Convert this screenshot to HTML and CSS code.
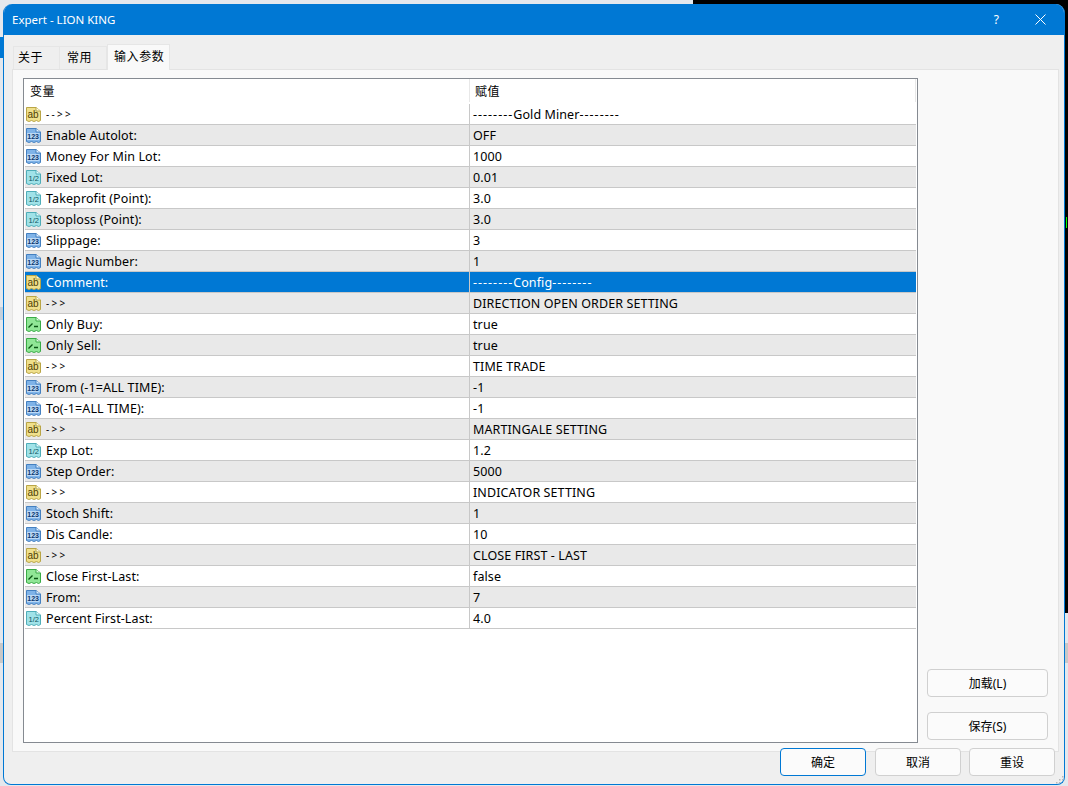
FILE: index.html
```html
<!DOCTYPE html>
<html>
    <head>
        <title>Expert - LION KING</title>
        <link rel="stylesheet" href="styles.css">
    </head>
    <body>
        <svg class="defs" width="0" height="0">
            <defs>
                <symbol id="sheet-ab" viewBox="0 0 17 17">
                    <path d="M1.500 1.500H11L15.500 5V14.500L13.500 15.500L11.500 14.500L9 15.500L6.500 14.500L4 15.500L1.500 14.500Z" fill="#f0e08c" stroke="#b9a546"/>
                    <path d="M11 1.500V5H15.500" fill="#fffbe0" stroke="#b9a546"/>
                    <text x="2.500" y="12" class="icon_text" fill="#4f4004" font-size="10">ab</text>
                </symbol>
                <symbol id="sheet-int" viewBox="0 0 17 17">
                    <path d="M1.500 1.500H11L15.500 5V14.500L13.500 15.500L11.500 14.500L9 15.500L6.500 14.500L4 15.500L1.500 14.500Z" fill="#7fb3e8" stroke="#4480c0"/>
                    <path d="M11 1.500V5H15.500" fill="#e0efff" stroke="#4480c0"/>
                    <rect x="2" y="6" width="12.500" height="7" fill="#bcd9f5"/>
                    <text x="2.300" y="12" class="icon_text" fill="#0a3670" font-size="7" font-weight="700">123</text>
                </symbol>
                <symbol id="sheet-dbl" viewBox="0 0 17 17">
                    <path d="M1.500 1.500H11L15.500 5V14.500L13.500 15.500L11.500 14.500L9 15.500L6.500 14.500L4 15.500L1.500 14.500Z" fill="#a0e2e8" stroke="#4fadb8"/>
                    <path d="M11 1.500V5H15.500" fill="#e6fbfd" stroke="#4fadb8"/>
                    <text x="3.500" y="12" class="icon_text" fill="#0c5560" font-size="7.500">1/2</text>
                </symbol>
                <symbol id="sheet-bool" viewBox="0 0 17 17">
                    <path d="M1.500 1.500H11L15.500 5V14.500L13.500 15.500L11.500 14.500L9 15.500L6.500 14.500L4 15.500L1.500 14.500Z" fill="#90e696" stroke="#3aab46"/>
                    <path d="M11 1.500V5H15.500" fill="#e2fbe4" stroke="#3aab46"/>
                    <path d="M3.500 11.500L7.500 7.500M9 10.500H13" fill="none" stroke="#0a5514" stroke-width="1.300"/>
                </symbol>
            </defs>
        </svg>

        <div class="edge edge_green"></div>

        <div id="window">
            <div id="titlebar">
                <span class="title">Expert - LION KING</span>
                <span class="help">?</span>
                <svg class="close" width="11" height="11" viewBox="0 0 11 11"><path d="M0.500 0.500L10.500 10.500M10.500 0.500L0.500 10.500" stroke="#fff" fill="none"/></svg>
            </div>
            <div id="content">
                <div id="tabs">
                    <div class="tab">关于</div>
                    <div class="tab">常用</div>
                    <div class="tab active">输入参数</div>
                </div>
                <div id="panel">
                    <div id="list">
                        <div class="head">
                            <div class="name">变量</div>
                            <div class="value">赋值</div>
                        </div>
                        <div class="row"><div class="name"><svg class="icon"><use href="#sheet-ab"/></svg><span class="small">--&gt;&gt;</span></div><div class="value"><span class="dash">--------</span>Gold Miner<span class="dash">--------</span></div></div>
                        <div class="row"><div class="name"><svg class="icon"><use href="#sheet-int"/></svg>Enable Autolot:</div><div class="value">OFF</div></div>
                        <div class="row"><div class="name"><svg class="icon"><use href="#sheet-int"/></svg>Money For Min Lot:</div><div class="value">1000</div></div>
                        <div class="row"><div class="name"><svg class="icon"><use href="#sheet-dbl"/></svg>Fixed Lot:</div><div class="value">0.01</div></div>
                        <div class="row"><div class="name"><svg class="icon"><use href="#sheet-dbl"/></svg>Takeprofit (Point):</div><div class="value">3.0</div></div>
                        <div class="row"><div class="name"><svg class="icon"><use href="#sheet-dbl"/></svg>Stoploss (Point):</div><div class="value">3.0</div></div>
                        <div class="row"><div class="name"><svg class="icon"><use href="#sheet-int"/></svg>Slippage:</div><div class="value">3</div></div>
                        <div class="row"><div class="name"><svg class="icon"><use href="#sheet-int"/></svg>Magic Number:</div><div class="value">1</div></div>
                        <div class="row selected"><div class="name"><svg class="icon"><use href="#sheet-ab"/></svg>Comment:</div><div class="value"><span class="dash">--------</span>Config<span class="dash">--------</span></div></div>
                        <div class="row"><div class="name"><svg class="icon"><use href="#sheet-ab"/></svg><span class="small">-&gt;&gt;</span></div><div class="value">DIRECTION OPEN ORDER SETTING</div></div>
                        <div class="row"><div class="name"><svg class="icon"><use href="#sheet-bool"/></svg>Only Buy:</div><div class="value">true</div></div>
                        <div class="row"><div class="name"><svg class="icon"><use href="#sheet-bool"/></svg>Only Sell:</div><div class="value">true</div></div>
                        <div class="row"><div class="name"><svg class="icon"><use href="#sheet-ab"/></svg><span class="small">-&gt;&gt;</span></div><div class="value">TIME TRADE</div></div>
                        <div class="row"><div class="name"><svg class="icon"><use href="#sheet-int"/></svg>From (-1=ALL TIME):</div><div class="value">-1</div></div>
                        <div class="row"><div class="name"><svg class="icon"><use href="#sheet-int"/></svg>To(-1=ALL TIME):</div><div class="value">-1</div></div>
                        <div class="row"><div class="name"><svg class="icon"><use href="#sheet-ab"/></svg><span class="small">-&gt;&gt;</span></div><div class="value">MARTINGALE SETTING</div></div>
                        <div class="row"><div class="name"><svg class="icon"><use href="#sheet-dbl"/></svg>Exp Lot:</div><div class="value">1.2</div></div>
                        <div class="row"><div class="name"><svg class="icon"><use href="#sheet-int"/></svg>Step Order:</div><div class="value">5000</div></div>
                        <div class="row"><div class="name"><svg class="icon"><use href="#sheet-ab"/></svg><span class="small">-&gt;&gt;</span></div><div class="value">INDICATOR SETTING</div></div>
                        <div class="row"><div class="name"><svg class="icon"><use href="#sheet-int"/></svg>Stoch Shift:</div><div class="value">1</div></div>
                        <div class="row"><div class="name"><svg class="icon"><use href="#sheet-int"/></svg>Dis Candle:</div><div class="value">10</div></div>
                        <div class="row"><div class="name"><svg class="icon"><use href="#sheet-ab"/></svg><span class="small">-&gt;&gt;</span></div><div class="value">CLOSE FIRST - LAST</div></div>
                        <div class="row"><div class="name"><svg class="icon"><use href="#sheet-bool"/></svg>Close First-Last:</div><div class="value">false</div></div>
                        <div class="row"><div class="name"><svg class="icon"><use href="#sheet-int"/></svg>From:</div><div class="value">7</div></div>
                        <div class="row"><div class="name"><svg class="icon"><use href="#sheet-dbl"/></svg>Percent First-Last:</div><div class="value">4.0</div></div>
                    </div>
                    <div id="side">
                        <button class="btn">加载(L)</button>
                        <button class="btn">保存(S)</button>
                    </div>
                </div>
                <div id="footer">
                    <button class="btn default">确定</button>
                    <button class="btn">取消</button>
                    <button class="btn">重设</button>
                </div>
            </div>
            <svg class="grip" width="8" height="8" viewBox="0 0 8 8">
                <path d="M6 0h1.500v1.500H6zM3 3h1.500v1.500H3zM6 3h1.500v1.500H6zM0 6h1.500v1.500H0zM3 6h1.500v1.500H3zM6 6h1.500v1.500H6z" fill="#b8b8b8"/>
            </svg>
        </div>
    </body>
</html>
```

FILE: styles.css
```css
html, body {
    height: 100%;
}
body {
    margin: 0px;
    padding: 4px 3px 0px 3px;
    box-sizing: border-box;
    overflow: hidden;
    font-family: "Noto Sans", "Noto Sans CJK SC", sans-serif;
    font-size: 12.5px;
    letter-spacing: 0.1px;
    color: #000;
    /* whatever sits behind the dialog */
    background:
        linear-gradient(#0078d4, #0078d4) left 37px / 3px 21px no-repeat,
        linear-gradient(#c4d0dc, #c4d0dc) left 307px / 3px 13px no-repeat,
        linear-gradient(#c8c8c8, #c8c8c8) left 643px / 3px 20px no-repeat,
        linear-gradient(#c8c8c8, #c8c8c8) right 643px / 3px 20px no-repeat,
        linear-gradient(#000, #000) right top / 375px 613px no-repeat,
        #e4e8ed;
}
.defs {
    position: absolute;
}
.icon_text {
    font-family: "Liberation Sans", sans-serif;
    letter-spacing: 0px;
}
.edge {
    position: absolute;
}
.edge_green {
    right: 1px;
    top: 217px;
    width: 1px;
    height: 11px;
    background: #00ff00;
}
#window {
    height: 781px;
    box-sizing: border-box;
    border: 1px solid #0078d4;
    border-top: 0px;
    border-radius: 9px 9px 8px 8px;
    background: #efefef;
    overflow: hidden;
    display: flex;
    flex-direction: column;
    position: relative;
}
#titlebar {
    height: 31px;
    flex: none;
    background: #0078d4;
    color: #fff;
    display: flex;
    align-items: center;
    padding: 0px 18px 0px 8px;
    letter-spacing: 0px;
    font-size: 11.5px;
}
.title {
    flex: 1;
}
.help {
    font-size: 12px;
    margin-right: 36px;
}
#content {
    flex: 1;
    display: flex;
    flex-direction: column;
    padding: 9px 5px 0px 8px;
    min-height: 0;
}
#tabs {
    display: flex;
    height: 25px;
    padding-left: 1px;
    align-items: flex-end;
}
.tab {
    width: 47px;
    height: 23px;
    box-sizing: border-box;
    border: 1px solid #e6e6e6;
    border-bottom: 0px;
    padding: 1px 0px 0px 4px;
    font-size: 12px;
    letter-spacing: 0.6px;
}
.tab + .tab {
    border-left: 0px;
    padding-left: 7px;
}
.tab.active {
    width: 63px;
    height: 26px;
    background: #f9f9f9;
    border-left: 1px solid #e6e6e6;
    padding: 2px 0px 0px 6px;
    margin-bottom: -1px;
    position: relative;
}
#panel {
    height: 683px;
    flex: none;
    box-sizing: border-box;
    background: #f9f9f9;
    border: 1px solid #e3e3e3;
    padding: 8px 10px 8px 10px;
    display: flex;
}
#list {
    width: 895px;
    flex: none;
    box-sizing: border-box;
    background: #fff;
    border: 1px solid #858a91;
    padding-left: 1px;
}
.head {
    height: 25px;
    display: flex;
    align-items: center;
    padding-bottom: 2px;
    box-sizing: border-box;
    font-size: 12px;
    letter-spacing: 0.6px;
}
.head .name {
    padding-left: 5px;
    height: 23px;
}
.head .value {
    padding-left: 5px;
    margin-right: 1px;
    height: 23px;
    display: flex;
    align-items: center;
    border-left: 1px solid #e8e8e8;
    border-right: 1px solid #e8e8e8;
}
.name {
    width: 444px;
    flex: none;
    display: flex;
    align-items: center;
    gap: 4px;
    box-sizing: border-box;
}
.value {
    flex: 1;
    padding-left: 3px;
}
.row {
    height: 21px;
    box-sizing: border-box;
    display: flex;
    align-items: center;
    border-bottom: 1px solid #c8c8c8;
    margin-right: 1px;
}
.row .value {
    height: 100%;
    display: flex;
    align-items: center;
    border-left: 1px solid #c8c8c8;
}
.row:nth-child(odd) {
    background: #e9e9e9;
}
.row.selected {
    background: #0078d4;
    color: #fff;
}
.icon {
    width: 17px;
    height: 17px;
    flex: none;
}
.small {
    font-size: 10px;
    letter-spacing: 2.3px;
}
.dash {
    letter-spacing: 1px;
}
#side {
    flex: 1;
    display: flex;
    flex-direction: column;
    justify-content: flex-end;
    align-items: flex-end;
    gap: 15px;
    padding: 0px 0px 3px 0px;
}
.btn {
    width: 121px;
    height: 28px;
    background: #fbfbfb;
    border: 1px solid #d0d0d0;
    border-radius: 4px;
    font-family: inherit;
    font-size: 12px;
    color: #000;
    padding: 0px;
}
#footer {
    display: flex;
    justify-content: flex-end;
    gap: 8px;
    margin-top: -4px;
    padding-right: 4px;
    position: relative;
}
#footer .btn {
    width: 86px;
}
#footer .default {
    border: 1px solid #0078d4;
    margin-right: 1px;
}
.grip {
    position: absolute;
    right: 0px;
    bottom: 0px;
}
```
